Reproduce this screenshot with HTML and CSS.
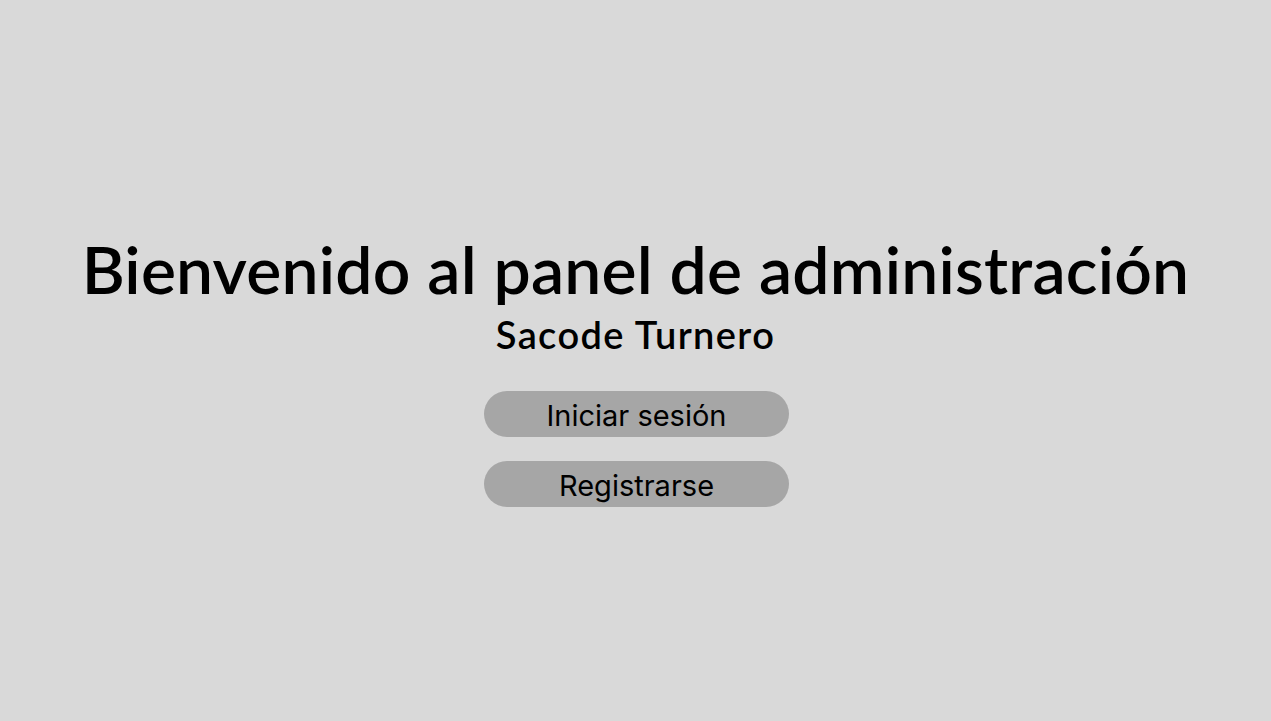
FILE: index.html
```html
<!DOCTYPE html>
<html lang="es">
<head>
<meta charset="utf-8">
<title>Sacode Turnero</title>
<link rel="stylesheet" href="styles.css">
</head>
<body>
<main class="hero">
  <h1 class="title">Bienvenido al panel de administración</h1>
  <h2 class="subtitle">Sacode Turnero</h2>
  <div class="actions">
    <button class="btn">Iniciar sesión</button>
    <button class="btn">Registrarse</button>
  </div>
</main>
</body>
</html>
```
FILE: styles.css
```css
html, body {
  margin: 0;
  padding: 0;
  height: 100%;
}
body {
  background: #d9d9d9;
  color: #000;
  font-family: "Lato", "Open Sans", sans-serif;
}
.hero {
  height: 100%;
  display: flex;
  flex-direction: column;
  align-items: center;
  padding-top: 230px;
  box-sizing: border-box;
}
.title {
  margin: 0;
  font-size: 66px;
  font-weight: 600;
  line-height: 78px;
  letter-spacing: 0.2px;
  white-space: nowrap;
}
.subtitle {
  margin: 4px 0 0;
  font-size: 38px;
  font-weight: 600;
  line-height: 44px;
  letter-spacing: 1.4px;
}
.actions {
  margin-top: 35px;
  margin-left: 2px;
  display: flex;
  flex-direction: column;
  gap: 24px;
}
.btn {
  width: 305px;
  height: 46px;
  border: none;
  border-radius: 23px;
  background: #a6a6a6;
  font-family: "Inter", sans-serif;
  font-size: 29px;
  color: #000;
  padding: 4px 0 0;
  line-height: 42px;
}
```
